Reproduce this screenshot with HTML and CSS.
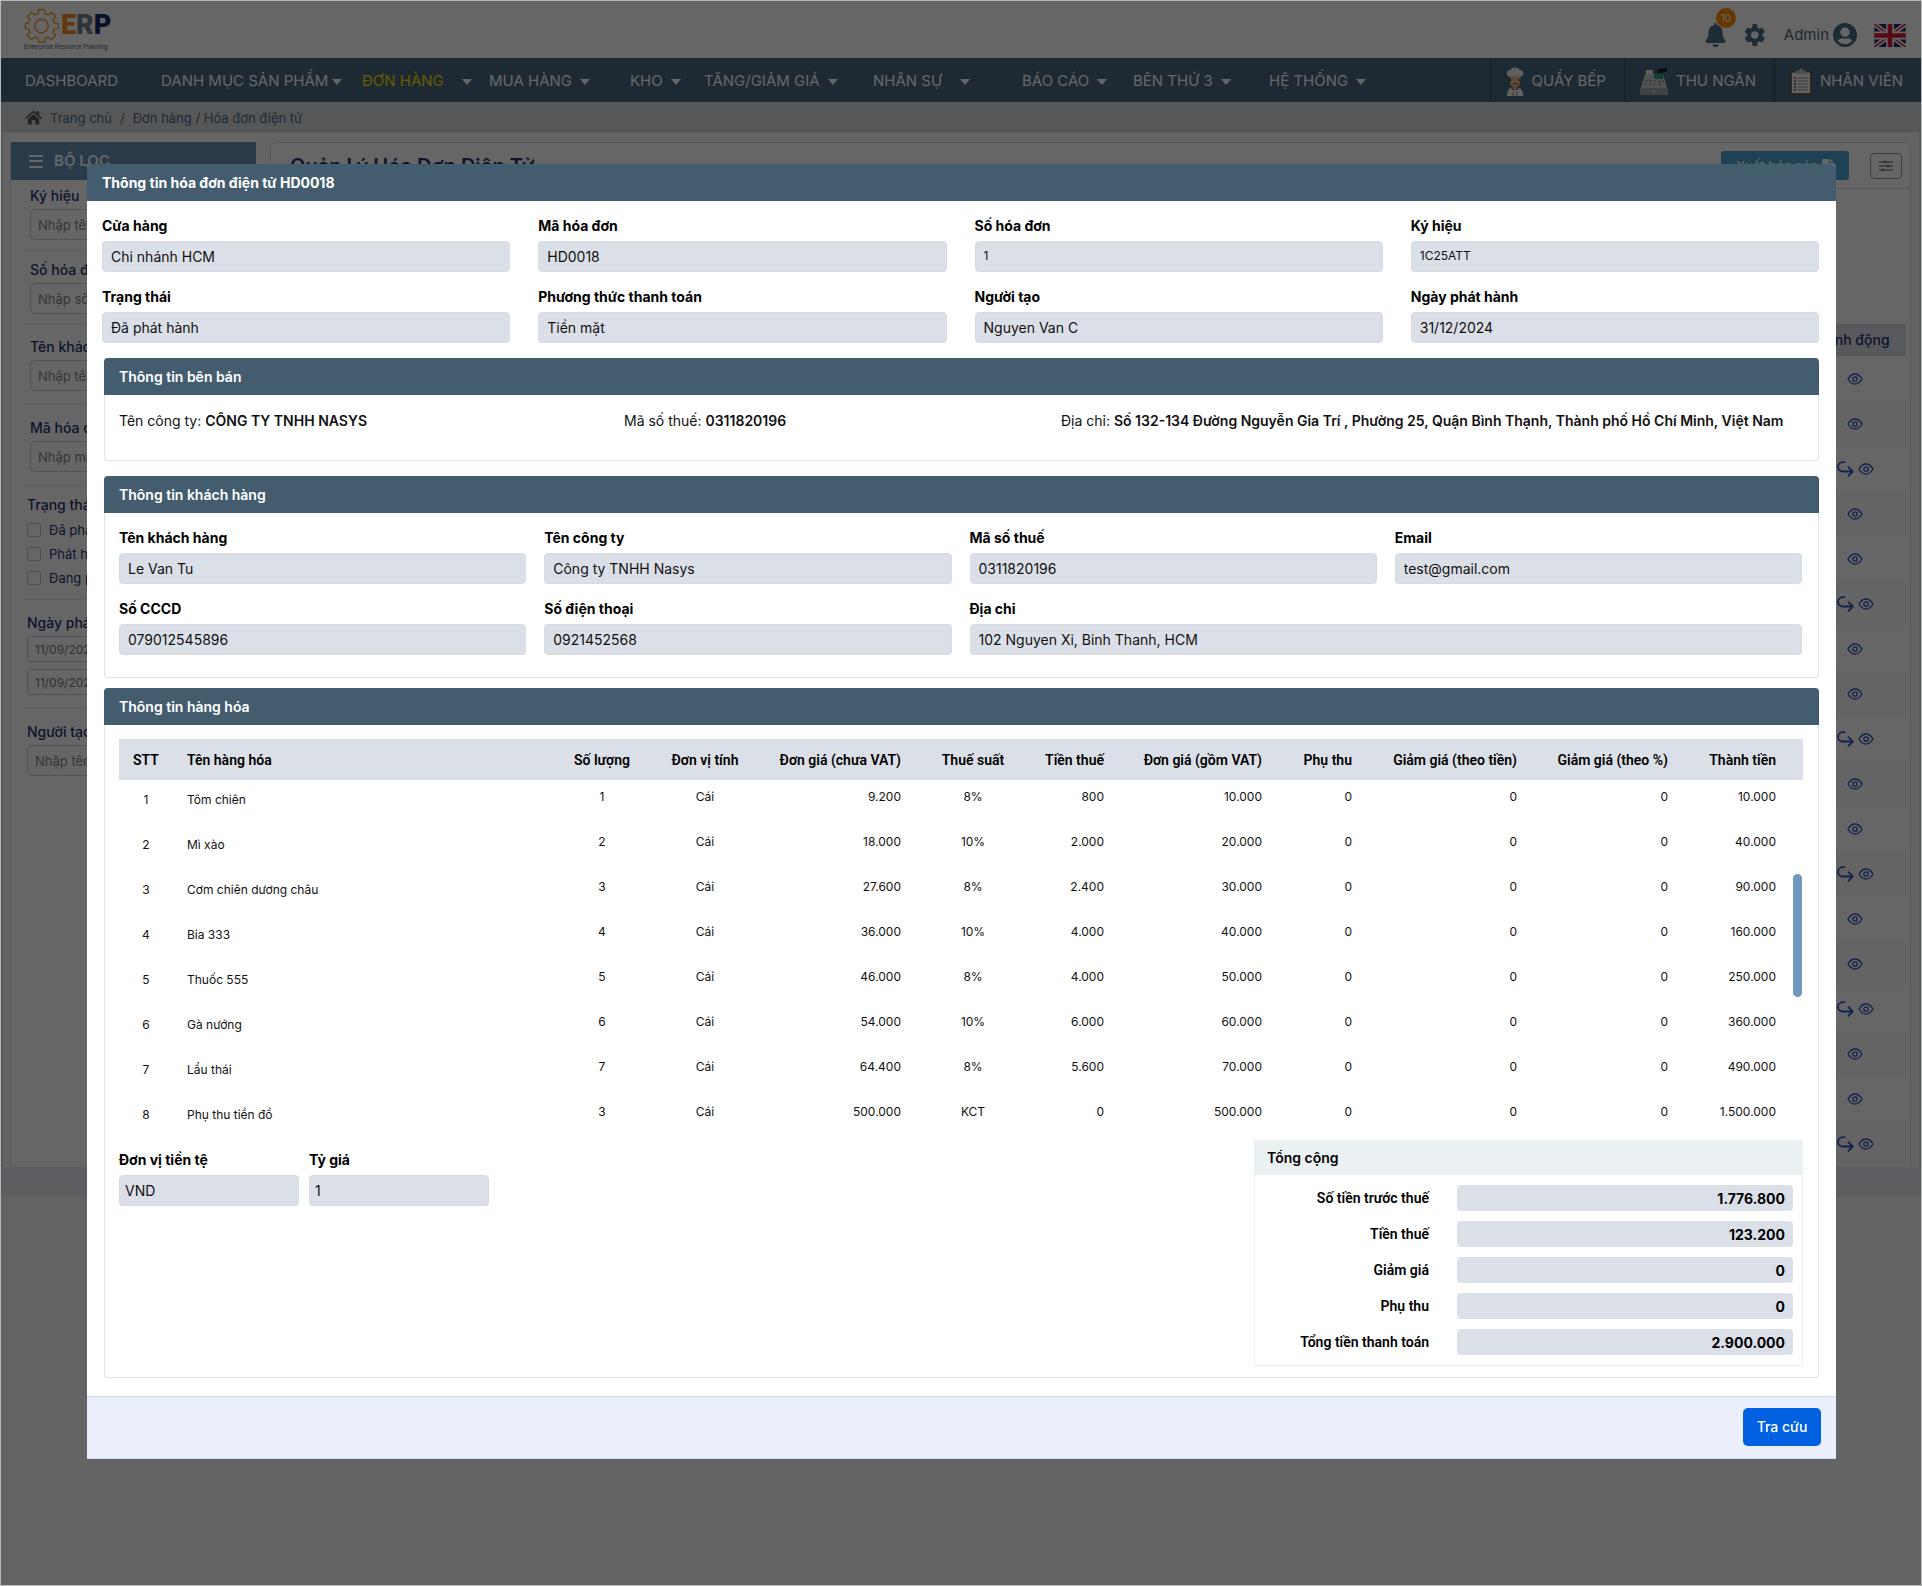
FILE: index.html
```html
<!DOCTYPE html>
<html lang="vi">
<head>
    <meta charset="UTF-8">
    <meta name="viewport" content="width=device-width, initial-scale=1.0">
    <title>Hóa đơn điện tử HD0018</title>
    <link rel="stylesheet" href="styles.css">
</head>
<body>
    <!-- Shared icons -->
    <svg class="sprite" aria-hidden="true">
        <symbol id="icon-eye" viewBox="0 0 16 12">
            <path d="M1 6C3 2.6 5.300 1 8 1s5 1.600 7 5c-2 3.400-4.300 5-7 5S3 9.400 1 6z" fill="none" stroke="currentColor" stroke-width="1.300" stroke-linejoin="round"/>
            <circle cx="8" cy="6" r="2.200" fill="none" stroke="currentColor" stroke-width="1.300"/>
        </symbol>
        <symbol id="icon-redo" viewBox="0 0 17 16">
            <path d="M7.500 1.200H6C3 1.200 1 3.300 1 5.800s2 4.700 5 4.700h9.500M11.500 6.200l4.200 4.300-4.200 4.300" fill="none" stroke="currentColor" stroke-width="1.800" stroke-linecap="round" stroke-linejoin="round"/>
        </symbol>
        <symbol id="icon-gear" viewBox="0 0 24 24">
            <path fill="currentColor" d="M19.400 13a7.800 7.800 0 0 0 0-2l2.200-1.700a.6.6 0 0 0 .1-.7l-2.200-3.700a.6.6 0 0 0-.7-.2l-2.600 1a7.500 7.500 0 0 0-1.700-1L14.100 1.500a.6.6 0 0 0-.6-.5h-3.400a.6.6 0 0 0-.6.5l-.4 3.200a7.500 7.500 0 0 0-1.700 1l-2.600-1a.6.6 0 0 0-.7.200L1.900 8.600a.6.6 0 0 0 .1.7L4.200 11a7.800 7.800 0 0 0 0 2L2 14.700a.6.6 0 0 0-.1.7l2.200 3.700c.1.300.4.300.7.200l2.600-1a7.500 7.500 0 0 0 1.700 1l.4 3.200c0 .3.300.5.600.5h3.400c.3 0 .6-.2.600-.5l.4-3.200a7.500 7.500 0 0 0 1.700-1l2.600 1c.3.100.6.100.7-.2l2.200-3.700a.6.6 0 0 0-.1-.7zM11.800 15.800a3.800 3.800 0 1 1 0-7.600 3.800 3.800 0 0 1 0 7.600z"/>
        </symbol>
    </svg>

    <div class="page">
        <header class="topbar">
            <div class="logo">
                <div class="logo-mark">
                    <svg class="logo-gear" viewBox="0 0 36 36" aria-hidden="true">
                        <g fill="none" stroke="#f59a23" stroke-width="1.400" stroke-linejoin="round">
                            <path d="M15 1.500h6l.6 4.200 3.300 1.400 3.400-2.600 4.200 4.200-2.600 3.400 1.400 3.300 4 .6v4.900l-4 .6-1.400 3.300 2.600 3.400-4.200 4.200-3.400-2.600-3.300 1.400-.6 4h-6l-.6-4-3.300-1.400-3.400 2.600-4.200-4.200 2.600-3.400-1.400-3.300-3.200-.6v-4.900l3.200-.6 1.400-3.300-2.600-3.400 4.200-4.200 3.400 2.600 3.300-1.400z"/>
                            <circle cx="18" cy="18.500" r="7"/>
                        </g>
                    </svg>
                    <span class="logo-text"><span class="logo-e">E</span><span class="logo-r">R</span><span class="logo-p">P</span></span>
                </div>
                <span class="logo-tagline">Enterprise Resource Planning</span>
            </div>
            <div class="topbar-tools">
                <button class="icon-button bell" aria-label="Thông báo">
                    <svg viewBox="0 0 20 24" width="21" height="24" aria-hidden="true"><path fill="currentColor" d="M10 0a1.500 1.500 0 0 0-1.500 1.500v.8C5 3 3 5.700 3 9c0 5-1.200 6.500-2.500 8-.9 1-.4 3 1.100 3h16.800c1.500 0 2-2 1.100-3C18.200 15.500 17 14 17 9c0-3.300-2-6-5.500-6.700v-.8A1.500 1.500 0 0 0 10 0zM7 21.500a3 2.500 0 0 0 6 0z"/></svg>
                    <span class="badge">10</span>
                </button>
                <button class="icon-button" aria-label="Cài đặt">
                    <svg width="24" height="24"><use href="#icon-gear"/></svg>
                </button>
                <a class="account" href="#">Admin
                    <svg viewBox="0 0 24 24" width="24" height="24" aria-hidden="true"><path fill="currentColor" fill-rule="evenodd" d="M12 0a12 12 0 1 0 0 24 12 12 0 0 0 0-24zm0 4.500a4.700 4.700 0 1 1 0 9.400 4.700 4.700 0 0 1 0-9.400zm0 16.800c-3 0-5.500-1.400-7.200-3.500 1-1.800 2.800-2.600 4.700-2.600.5 0 1.200.5 2.500.5s2-.5 2.500-.5c1.900 0 3.700.8 4.700 2.600-1.700 2.100-4.200 3.500-7.200 3.500z"/></svg>
                </a>
                <svg class="flag" viewBox="0 0 60 44" width="32" height="23" role="img" aria-label="English">
                    <path fill="#1b2a7a" d="M0 0h60v44H0z"/>
                    <path stroke="#fff" stroke-width="9" d="M0 0l60 44M60 0L0 44"/>
                    <path stroke="#d6203a" stroke-width="3" d="M0 0l60 44M60 0L0 44"/>
                    <path stroke="#fff" stroke-width="15" d="M30 0v44M0 22h60"/>
                    <path stroke="#d6203a" stroke-width="9" d="M30 0v44M0 22h60"/>
                </svg>
            </div>
        </header>

        <nav class="navbar">
            <div class="nav-menu">
                <a href="#">DASHBOARD</a>
                <a class="has-menu snug" href="#">DANH MỤC SẢN PHẨM</a>
                <a class="has-menu wide active" href="#">ĐƠN HÀNG</a>
                <a class="has-menu" href="#">MUA HÀNG</a>
                <a class="has-menu" href="#">KHO</a>
                <a class="has-menu" href="#">TĂNG/GIẢM GIÁ</a>
                <a class="has-menu wide" href="#">NHÂN SỰ</a>
                <a class="has-menu" href="#">BÁO CÁO</a>
                <a class="has-menu" href="#">BÊN THỨ 3</a>
                <a class="has-menu" href="#">HỆ THỐNG</a>
            </div>
            <div class="nav-shortcuts">
                <a href="#">
                    <svg viewBox="0 0 18 29" width="18" height="29" aria-hidden="true">
                        <path fill="#f6f1ea" d="M3 9.500C-.5 8 0 3.200 4 3.200 5-.3 12.500-.6 13.800 3 18 3 18.500 8 15 9.500z"/>
                        <path fill="#d9d3ca" d="M3.500 9.500h11v1.800h-11z"/>
                        <path fill="#f2b98a" d="M4 11.300h10v4c0 3.200-2 4.700-5 4.700s-5-1.500-5-4.700z"/>
                        <path fill="#7a4526" d="M4 11.300h1.200v3H4zM12.800 11.300H14v3h-1.200zM6.500 16.200h5v1h-5z"/>
                        <path fill="#f4f4f4" d="M1 29c0-5 2-8 5-8.500h6c3 .5 5 3.500 5 8.500z"/>
                        <path fill="#c23b3b" d="M5.500 20l3.500 2.500 3.500-2.500v2L9 23.500 5.500 22z"/>
                        <path fill="#444" d="M6.500 25h1.200v1.200H6.500zM10.300 25h1.200v1.200h-1.200zM6.500 27.200h1.200v1.200H6.500zM10.300 27.200h1.200v1.200h-1.200z"/>
                    </svg>
                    QUẦY BẾP
                </a>
                <a href="#">
                    <svg viewBox="0 0 28 27" width="28" height="27" aria-hidden="true">
                        <path fill="#222" d="M17 1.500L27 0v3.500l-9 2z"/>
                        <path fill="#eee" d="M6 2h7v6H6z"/>
                        <path fill="#c9d2d0" d="M5 6h18l4 14H1z"/>
                        <path fill="#2e9b84" d="M14 6h9v5h-9z"/>
                        <path fill="#7d8886" d="M5.500 12h2v1.500h-2zM9.500 12h2v1.500h-2zM13.500 12h2v1.500h-2zM4.500 15.500h2V17h-2zM9 15.500h2V17H9zM13.500 15.500h2V17h-2z"/>
                        <path fill="#d8534f" d="M18.500 12.500h2V14h-2zM19 15.500h2V17h-2z"/>
                        <path fill="#2e9b84" d="M22 12.500h2V14h-2z"/>
                        <path fill="#a4a8a6" d="M0 20h28v7H0z"/>
                        <path fill="#eee" d="M13 22.500h2v2h-2z"/>
                    </svg>
                    THU NGÂN
                </a>
                <a href="#">
                    <svg viewBox="0 0 22 27" width="22" height="27" aria-hidden="true">
                        <path fill="#5b5148" d="M0 3h22v24H0z"/>
                        <path fill="#f3f3f0" d="M1.800 4.500h18.400v20.700H1.800z"/>
                        <path fill="#bdbdbd" d="M6 2.500h3a2 2 0 0 1 4 0h3v3.700H6z"/>
                        <path stroke="#999" d="M7.500 10h10.500M7.500 13h10.500M7.500 16h10.500M7.500 19h10.500M7.500 22h10.500"/>
                        <path fill="#d8534f" d="M4 9h2v2H4zM4 15h2v2H4z"/>
                        <path fill="#3f9b62" d="M4 12h2v2H4zM4 18h2v2H4z"/>
                        <path fill="#777" d="M4 21h2v2H4z"/>
                    </svg>
                    NHÂN VIÊN
                </a>
            </div>
        </nav>

        <div class="breadcrumb">
            <svg viewBox="0 0 18 15" width="17" height="15" aria-hidden="true"><path fill="#555" d="M9 0l3.500 3V1H15v4.200l3 2.600-1.100 1.300L9 2.300 1.100 9.100 0 7.800zM9 3.800l6 5.200v6h-4.200v-4.500H7.200V15H3V9z"/></svg>
            <a href="#">Trang chủ</a><span>/</span><a href="#">Đơn hàng / Hóa đơn điện tử</a>
        </div>

        <div class="workspace">
            <aside class="filters">
                <h2><span class="menu-lines"></span>BỘ LỌC</h2>
                <div class="filter-body">
                    <div class="filter-group tight inset">
                        <label for="f-symbol">Ký hiệu</label>
                        <input id="f-symbol" type="text" placeholder="Nhập tên ký hiệu">
                    </div>
                    <div class="filter-group compact inset">
                        <label for="f-number">Số hóa đơn</label>
                        <input id="f-number" type="text" placeholder="Nhập số hóa đơn">
                    </div>
                    <div class="filter-group inset">
                        <label for="f-customer">Tên khách hàng</label>
                        <input id="f-customer" type="text" placeholder="Nhập tên khách hàng">
                    </div>
                    <div class="filter-group inset">
                        <label for="f-code">Mã hóa đơn</label>
                        <input id="f-code" type="text" placeholder="Nhập mã hóa đơn">
                    </div>
                    <fieldset class="filter-group compact">
                        <legend>Trạng thái</legend>
                        <label class="check"><input type="checkbox">Đã phát hành</label>
                        <label class="check"><input type="checkbox">Phát hành lỗi</label>
                        <label class="check"><input type="checkbox">Đang phát hành</label>
                    </fieldset>
                    <div class="filter-group">
                        <label for="f-from">Ngày phát hành</label>
                        <input id="f-from" class="date" type="text" value="11/09/2024">
                        <input class="date" type="text" value="11/09/2024" aria-label="Đến ngày">
                    </div>
                    <div class="filter-group">
                        <label for="f-creator">Người tạo</label>
                        <input id="f-creator" type="text" placeholder="Nhập tên người tạo">
                    </div>
                </div>
            </aside>

            <main class="panel">
                <div class="panel-head">
                    <h1>Quản Lý Hóa Đơn Điện Tử</h1>
                    <button class="export">Xuất báo cáo
                        <svg viewBox="0 0 12 14" width="12" height="14" aria-hidden="true"><path fill="currentColor" d="M0 1a1 1 0 0 1 1-1h6v4h5v9a1 1 0 0 1-1 1H1a1 1 0 0 1-1-1zM8 0l4 3H8z"/></svg>
                    </button>
                    <button class="columns" aria-label="Tùy chỉnh cột">
                        <svg viewBox="0 0 14 12" width="14" height="12" aria-hidden="true"><g fill="none" stroke="currentColor"><path d="M0 2h5M7 2h7M0 6h8M10 6h4M0 10h3M5 10h9"/><circle cx="6" cy="2" r="1"/><circle cx="9" cy="6" r="1"/><circle cx="4" cy="10" r="1"/></g></svg>
                    </button>
                </div>
                <table class="invoices">
                    <thead><tr><th></th><th class="actions">Hành động</th></tr></thead>
                    <tbody id="invoice-rows"></tbody>
                </table>
            </main>
        </div>
        <div class="pager"></div>
    </div>

    <div class="overlay">
        <section class="modal" role="dialog" aria-labelledby="modal-title">
            <h2 class="modal-title" id="modal-title">Thông tin hóa đơn điện tử HD0018</h2>

            <div class="modal-body">
                <div class="fields">
                    <div class="field"><label for="store">Cửa hàng</label><input id="store" value="Chi nhánh HCM" readonly></div>
                    <div class="field"><label for="code">Mã hóa đơn</label><input id="code" value="HD0018" readonly></div>
                    <div class="field"><label for="number">Số hóa đơn</label><input id="number" class="small" value="1" readonly></div>
                    <div class="field"><label for="symbol">Ký hiệu</label><input id="symbol" class="small" value="1C25ATT" readonly></div>
                    <div class="field"><label for="status">Trạng thái</label><input id="status" value="Đã phát hành" readonly></div>
                    <div class="field"><label for="payment">Phương thức thanh toán</label><input id="payment" value="Tiền mặt" readonly></div>
                    <div class="field"><label for="creator">Người tạo</label><input id="creator" value="Nguyen Van C" readonly></div>
                    <div class="field"><label for="issued">Ngày phát hành</label><input id="issued" value="31/12/2024" readonly></div>
                </div>

                <section class="card">
                    <h3>Thông tin bên bán</h3>
                    <div class="seller">
                        <p>Tên công ty: <strong>CÔNG TY TNHH NASYS</strong></p>
                        <p>Mã số thuế: <strong>0311820196</strong></p>
                        <p>Địa chỉ: <strong>Số 132-134 Đường Nguyễn Gia Trí , Phường 25, Quận Bình Thạnh, Thành phố Hồ Chí Minh, Việt Nam</strong></p>
                    </div>
                </section>

                <section class="card">
                    <h3>Thông tin khách hàng</h3>
                    <div class="fields customer">
                        <div class="field"><label for="c-name">Tên khách hàng</label><input id="c-name" value="Le Van Tu" readonly></div>
                        <div class="field"><label for="c-company">Tên công ty</label><input id="c-company" value="Công ty TNHH Nasys" readonly></div>
                        <div class="field"><label for="c-tax">Mã số thuế</label><input id="c-tax" value="0311820196" readonly></div>
                        <div class="field"><label for="c-email">Email</label><input id="c-email" value="test@gmail.com" readonly></div>
                        <div class="field"><label for="c-id">Số CCCD</label><input id="c-id" value="079012545896" readonly></div>
                        <div class="field"><label for="c-phone">Số điện thoại</label><input id="c-phone" value="0921452568" readonly></div>
                        <div class="field span-2"><label for="c-address">Địa chỉ</label><input id="c-address" value="102 Nguyen Xi, Binh Thanh, HCM" readonly></div>
                    </div>
                </section>

                <section class="card">
                    <h3>Thông tin hàng hóa</h3>
                    <div class="goods-wrap">
                        <table class="goods">
                            <colgroup>
                                <col class="w-no"><col><col class="w-qty"><col class="w-unit"><col class="w-price">
                                <col class="w-rate"><col class="w-tax"><col class="w-price"><col class="w-extra">
                                <col class="w-discount"><col class="w-percent"><col class="w-total">
                            </colgroup>
                            <thead>
                                <tr>
                                    <th class="center">STT</th>
                                    <th class="left">Tên hàng hóa</th>
                                    <th class="center">Số lượng</th>
                                    <th class="center">Đơn vị tính</th>
                                    <th>Đơn giá (chưa VAT)</th>
                                    <th class="center">Thuế suất</th>
                                    <th>Tiền thuế</th>
                                    <th>Đơn giá (gồm VAT)</th>
                                    <th>Phụ thu</th>
                                    <th>Giảm giá (theo tiền)</th>
                                    <th>Giảm giá (theo %)</th>
                                    <th>Thành tiền</th>
                                </tr>
                            </thead>
                            <tbody id="goods-rows"></tbody>
                        </table>
                        <span class="scroll-thumb"></span>
                    </div>
                    <div class="summary">
                        <div class="currency">
                            <div class="field"><label for="currency">Đơn vị tiền tệ</label><input id="currency" value="VND" readonly></div>
                            <div class="field"><label for="rate">Tỷ giá</label><input id="rate" value="1" readonly></div>
                        </div>
                        <div class="totals">
                            <h4>Tổng cộng</h4>
                            <div class="total-line"><label for="t-net">Số tiền trước thuế</label><input id="t-net" value="1.776.800" readonly></div>
                            <div class="total-line"><label for="t-tax">Tiền thuế</label><input id="t-tax" value="123.200" readonly></div>
                            <div class="total-line"><label for="t-discount">Giảm giá</label><input id="t-discount" value="0" readonly></div>
                            <div class="total-line"><label for="t-extra">Phụ thu</label><input id="t-extra" value="0" readonly></div>
                            <div class="total-line"><label for="t-total">Tổng tiền thanh toán</label><input id="t-total" value="2.900.000" readonly></div>
                        </div>
                    </div>
                </section>
            </div>

            <footer class="modal-footer">
                <button class="primary">Tra cứu</button>
            </footer>
        </section>
    </div>

    <script src="script.js"></script>
</body>
</html>
```

FILE: styles.css
```css
/* Basic reset */
* {
    margin: 0;
    padding: 0;
    box-sizing: border-box;
}

body {
    position: relative;
    min-height: 100vh;
    padding: 1px;
    background-color: #b5b9b9;
    color: #111;
    font-family: Inter, "Noto Sans", sans-serif;
    font-size: 14px;
    line-height: 20px;
}

input,
button {
    font: inherit;
    color: inherit;
}

button {
    cursor: pointer;
}

a {
    color: inherit;
    text-decoration: none;
}

.sprite {
    position: absolute;
    width: 0;
    height: 0;
}

.page {
    display: flex;
    flex-direction: column;
    min-height: calc(100vh - 2px);
    background-color: #f9f9f9;
}

/* Top bar */
.topbar {
    display: flex;
    justify-content: space-between;
    align-items: flex-start;
    height: 57px;
    padding: 7px 15px 0 23px;
    background-color: #fff;
}

.logo {
    display: flex;
    flex-direction: column;
}

.logo-mark {
    display: flex;
    align-items: center;
    gap: 2px;
    height: 35px;
}

.logo-gear {
    width: 35px;
    height: 35px;
}

.logo-text {
    display: flex;
    font-family: Roboto, sans-serif;
    font-size: 27px;
    font-weight: 900;
    line-height: 35px;
}

.logo-e {
    color: #f28c1c;
}

.logo-r {
    color: #77838f;
}

.logo-p {
    color: #1c2a6b;
}

.logo-tagline {
    color: #555;
    font-size: 6px;
    line-height: 8px;
}

.topbar-tools {
    display: flex;
    align-items: center;
    padding-top: 15px;
    gap: 17px;
    color: #4a6b82;
}

.icon-button {
    display: flex;
    position: relative;
    border: none;
    background: none;
}

.badge {
    position: absolute;
    top: -15px;
    left: 11px;
    width: 20px;
    height: 20px;
    border-radius: 50%;
    background-color: #ff8c00;
    color: #fff;
    font-size: 10px;
    line-height: 20px;
    text-align: center;
}

.account {
    display: flex;
    align-items: center;
    gap: 4px;
    font-size: 15px;
}

/* Navigation */
.navbar {
    display: flex;
    justify-content: space-between;
    height: 44px;
    background-color: #4c697f;
    color: #fff;
    font-size: 15px;
}

.nav-menu {
    display: grid;
    grid-template-columns: 136px 201px 127px 141px 74px 169px 149px 111px 136px auto;
    align-items: center;
    padding: 2px 0 0 24px;
    white-space: nowrap;
}

.has-menu::after {
    content: "";
    display: inline-block;
    margin-left: 8px;
    border: 5px solid transparent;
    border-top: 6px solid #fff;
    border-bottom: none;
    vertical-align: 1px;
}

.has-menu.snug::after {
    margin-left: 4px;
}

.has-menu.wide::after {
    margin-left: 18px;
}

.nav-menu .active {
    color: #ffe100;
}

.nav-shortcuts {
    display: flex;
}

.nav-shortcuts a {
    display: flex;
    align-items: center;
    gap: 8px;
    padding: 2px 18px 0 15px;
    border-left: 1px solid #2f4656;
    white-space: nowrap;
}

.breadcrumb {
    display: flex;
    align-items: center;
    gap: 8px;
    height: 30px;
    padding: 2px 24px 0;
    background-color: #d8dadf;
    border-bottom: 1px solid #c9ced6;
    color: #4c697f;
    font-size: 13px;
}

/* Workspace */
.workspace {
    display: flex;
    align-items: stretch;
    gap: 14px;
    padding: 10px 8px 0 7px;
    height: 1035px;
    border: 1px solid #d8dade;
    border-width: 0 2px;
}

.filters {
    flex: 0 0 246px;
    background-color: #fff;
    border-left: 1px solid #dadada;
}

.filters h2 {
    display: flex;
    align-items: center;
    gap: 11px;
    height: 38px;
    padding-left: 18px;
    background-color: #6694b6;
    color: #fff;
    font-size: 15px;
    font-weight: 600;
}

.menu-lines {
    width: 14px;
    height: 13px;
    border: solid #fff;
    border-width: 2px 0;
    background: linear-gradient(#fff, #fff) center / 100% 2px no-repeat;
}

.filter-body {
    padding: 0 12px;
}

.filter-group {
    padding: 13px 4px;
    border: none;
    border-bottom: 1px solid #ececec;
}

.filter-group:last-child {
    border-bottom: none;
}

.filter-group.inset {
    padding-left: 7px;
}

.filter-group.compact {
    padding-top: 9px;
    padding-bottom: 9px;
}

.filter-group.tight {
    padding-top: 6px;
    padding-bottom: 10px;
}

.filter-group label,
.filter-group legend {
    display: block;
    margin-bottom: 3px;
    color: #26336e;
    font-weight: 500;
}

.filter-group legend {
    float: left;
    width: 100%;
}

.filter-group input[type="text"] {
    display: block;
    width: 100%;
    height: 31px;
    padding: 0 7px;
    border: 1px solid #ccc;
    border-radius: 5px;
    background-color: #fff;
    font-size: 13px;
}

.filter-group input::placeholder {
    color: #888;
}

.filter-group input[type="text"].date {
    height: 26px;
    margin-bottom: 7px;
    border-color: #c3cae6;
    border-radius: 3px;
    color: #777;
    font-size: 12px;
}

.filter-group input[type="text"].date:last-child {
    margin-bottom: 0;
}

.filter-group .check {
    display: flex;
    clear: both;
    align-items: center;
    gap: 8px;
    height: 24px;
    margin: 0;
    font-size: 13px;
    font-weight: 400;
}

.check input {
    appearance: none;
    width: 14px;
    height: 14px;
    border: 1px solid #c8c8c8;
    border-radius: 2px;
}

.panel {
    flex: 1;
    padding: 0 4px;
    border: 1px solid #dadada;
    border-bottom: none;
    border-radius: 6px 6px 0 0;
    background-color: #fff;
}

.panel-head {
    display: flex;
    align-items: center;
    height: 46px;
    padding: 0 8px 0 19px;
    margin: 0 -4px;
    border-bottom: 1px solid #dadada;
}

.panel-head h1 {
    flex: 1;
    color: #26336e;
    font-size: 20px;
    font-weight: 600;
}

.export {
    display: flex;
    align-items: center;
    justify-content: center;
    gap: 4px;
    width: 128px;
    height: 29px;
    margin-right: 21px;
    border: none;
    border-radius: 3px;
    background-color: #4ba3d3;
    color: #fff;
    font-size: 13px;
    font-weight: 500;
}

.columns {
    display: flex;
    align-items: center;
    justify-content: center;
    width: 32px;
    height: 26px;
    border: 1px solid #999;
    border-radius: 4px;
    background-color: #fff;
    color: #555;
}

.invoices {
    width: 100%;
    margin-top: 135px;
    border-collapse: collapse;
}

.invoices th {
    height: 32px;
    background-color: #dbdfe9;
    color: #26336e;
    font-weight: 500;
}

.invoices .actions {
    width: 102px;
    padding-right: 4px;
    text-align: center;
}

.invoices td {
    height: 45px;
}

.invoices tbody tr:nth-child(even) {
    background-color: #fbfbfb;
}

.row-actions {
    display: flex;
    align-items: center;
    justify-content: center;
    gap: 4px;
}

.row-actions button {
    display: flex;
    border: none;
    background: none;
    color: #2f53c0;
}

.pager {
    height: 30px;
    background-color: #e6e8f2;
}

/* Modal */
.overlay {
    position: absolute;
    inset: 1px;
    padding: 163px 85px 0 86px;
    background-color: rgba(0, 0, 0, 0.6);
}

.modal {
    background-color: #fff;
    border-radius: 4px 4px 0 0;
    overflow: hidden;
}

.modal-title,
.card h3 {
    height: 37px;
    background-color: #435d6f;
    color: #fff;
    font-size: 14px;
    font-weight: 600;
    line-height: 37px;
}

.modal-title {
    padding-left: 15px;
    font-weight: 700;
}

.modal-body {
    padding: 15px 17px 18px 15px;
}

.fields {
    display: grid;
    grid-template-columns: repeat(4, 1fr);
    gap: 15px 28px;
}

.field label {
    display: block;
    margin-bottom: 5px;
    color: #000;
    font-weight: 700;
}

.field input {
    display: block;
    width: 100%;
    height: 31px;
    padding: 0 8px;
    border: 1px solid #d8dadf;
    border-radius: 4px;
    background-color: #dbdfe8;
}

.field input.small {
    padding-bottom: 2px;
    font-size: 12px;
}

.span-2 {
    grid-column: span 2;
}

.card {
    margin: 15px 0 0 2px;
    border: 1px solid #e0e2e5;
    border-top: none;
    border-radius: 4px;
}

.card h3 {
    margin: 0 -1px;
    padding-left: 15px;
    border-radius: 4px 4px 0 0;
}

.card:last-child {
    margin-top: 10px;
}

.seller {
    display: grid;
    grid-template-columns: 505px 437px 1fr;
    padding: 16px 14px 29px;
    white-space: nowrap;
}

.seller strong {
    font-weight: 600;
}

.fields.customer {
    gap: 15px 18px;
    padding: 15px 16px 22px 14px;
}

/* Goods table */
.goods-wrap {
    position: relative;
    padding: 14px 15px 0 14px;
}

.goods {
    width: 100%;
    table-layout: fixed;
    border-collapse: collapse;
    font-size: 12px;
    line-height: 16px;
}

.goods th {
    height: 41px;
    padding: 0 14px;
    background-color: #dbdfe8;
    color: #000;
    font-family: Roboto, sans-serif;
    font-size: 14px;
    font-weight: 600;
    text-align: right;
    white-space: nowrap;
}

.goods td {
    height: 45px;
    padding: 9px 14px 0;
    text-align: right;
    vertical-align: top;
}

.goods td:nth-child(-n+2) {
    padding-top: 12px;
}

.goods .left {
    text-align: left;
}

.goods .center {
    padding-left: 0;
    padding-right: 0;
    text-align: center;
}

.goods th:last-child,
.goods td:last-child {
    padding-right: 27px;
}

.w-no { width: 54px; }
.w-qty { width: 102px; }
.w-unit { width: 104px; }
.w-price { width: 158px; }
.w-rate { width: 116px; }
.w-tax { width: 87px; }
.w-extra { width: 90px; }
.w-discount { width: 165px; }
.w-percent { width: 151px; }
.w-total { width: 121px; }

.scroll-thumb {
    position: absolute;
    top: 149px;
    right: 16px;
    width: 9px;
    height: 123px;
    border-radius: 5px;
    background-color: #7197be;
}

.summary {
    display: flex;
    justify-content: space-between;
    padding: 0 15px 11px 14px;
}

.currency {
    display: flex;
    gap: 10px;
    padding-top: 10px;
}

.currency .field {
    width: 180px;
}

.currency .field input {
    padding: 0 5px;
}

.totals {
    width: 549px;
    border: 1px solid #ebf0f3;
}

.totals h4 {
    height: 34px;
    margin-bottom: 10px;
    padding-left: 12px;
    background-color: #ebf0f3;
    color: #000;
    font-size: 14px;
    font-weight: 600;
    line-height: 34px;
}

.total-line {
    display: flex;
    align-items: center;
    justify-content: flex-end;
    gap: 28px;
    margin-bottom: 10px;
    padding-right: 9px;
    color: #000;
}

.total-line label {
    font-family: Roboto, sans-serif;
    font-weight: 600;
}

.total-line input {
    width: 336px;
    height: 26px;
    padding: 0 8px;
    border: none;
    border-radius: 4px;
    background-color: #dbdfe8;
    font-weight: 700;
    text-align: right;
}

.modal-footer {
    display: flex;
    justify-content: flex-end;
    padding: 11px 15px 12px;
    border-top: 1px solid #cfdaf5;
    border-bottom: 1px solid #cfdaf5;
    background-color: #ebeffc;
}

.primary {
    width: 78px;
    height: 38px;
    border: none;
    border-radius: 5px;
    background-color: #0062e0;
    color: #fff;
    font-weight: 500;
}
```

FILE: script.js
```js
const goods = [
    ["Tôm chiên", 1, "Cái", "9.200", "8%", "800", "10.000", "10.000"],
    ["Mì xào", 2, "Cái", "18.000", "10%", "2.000", "20.000", "40.000"],
    ["Cơm chiên dương châu", 3, "Cái", "27.600", "8%", "2.400", "30.000", "90.000"],
    ["Bia 333", 4, "Cái", "36.000", "10%", "4.000", "40.000", "160.000"],
    ["Thuốc 555", 5, "Cái", "46.000", "8%", "4.000", "50.000", "250.000"],
    ["Gà nướng", 6, "Cái", "54.000", "10%", "6.000", "60.000", "360.000"],
    ["Lẩu thái", 7, "Cái", "64.400", "8%", "5.600", "70.000", "490.000"],
    ["Phụ thu tiền đồ", 3, "Cái", "500.000", "KCT", "0", "500.000", "1.500.000"]
];

document.getElementById("goods-rows").innerHTML = goods.map((item, index) => {
    const [name, quantity, unit, price, rate, tax, gross, total] = item;
    return `<tr>
        <td class="center">${index + 1}</td>
        <td class="left">${name}</td>
        <td class="center">${quantity}</td>
        <td class="center">${unit}</td>
        <td>${price}</td>
        <td class="center">${rate}</td>
        <td>${tax}</td>
        <td>${gross}</td>
        <td>0</td>
        <td>0</td>
        <td>0</td>
        <td>${total}</td>
    </tr>`;
}).join("");

// Every third invoice can also be reissued
const redo = '<button aria-label="Phát hành lại"><svg width="17" height="16"><use href="#icon-redo"/></svg></button>';
const view = '<button aria-label="Xem"><svg width="16" height="12"><use href="#icon-eye"/></svg></button>';
let rows = "";
for (let i = 1; i <= 18; i++) {
    rows += `<tr><td></td><td><div class="row-actions">${i % 3 === 0 ? redo : ""}${view}</div></td></tr>`;
}
document.getElementById("invoice-rows").innerHTML = rows;
```
